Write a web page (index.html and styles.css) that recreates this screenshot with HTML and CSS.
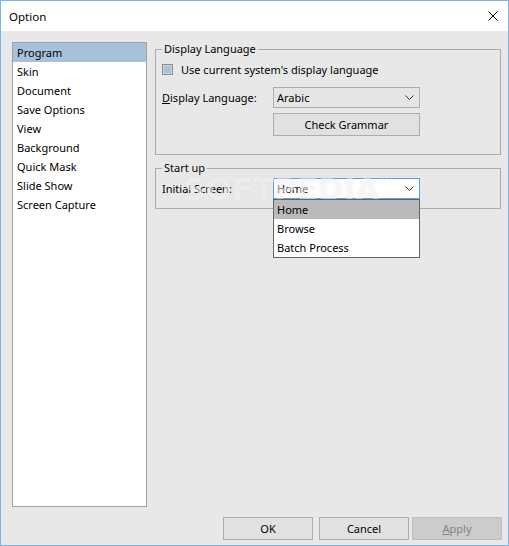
FILE: index.html
```html
<!DOCTYPE html>
<html>
<head>
<meta charset="utf-8">
<link rel="stylesheet" href="styles.css">
</head>
<body>
<div class="window">
  <div class="titlebar">
    <span class="title">Option</span>
    <svg class="close" width="10" height="10" viewBox="0 0 10 10"><path d="M0.5 0.5L9.5 9.5M9.5 0.5L0.5 9.5" stroke="#000" stroke-width="1" fill="none"/></svg>
  </div>
  <div class="content">
    <div class="main">
      <ul class="list">
        <li class="selected">Program</li>
        <li>Skin</li>
        <li>Document</li>
        <li>Save Options</li>
        <li>View</li>
        <li>Background</li>
        <li>Quick Mask</li>
        <li>Slide Show</li>
        <li>Screen Capture</li>
      </ul>
      <div class="panel">
        <fieldset class="group g1">
          <legend>Display Language</legend>
          <div class="row check-row"><span class="checkbox"></span><span>Use current system's display language</span></div>
          <div class="row field-row">
            <span class="label"><u>D</u>isplay Language:</span>
            <div class="combo"><span>Arabic</span><svg class="chev" width="9" height="5" viewBox="0 0 9 5"><polyline points="0.5,0.5 4.5,4.5 8.5,0.5" fill="none" stroke="#333" stroke-width="1"/></svg></div>
          </div>
          <div class="row btn-row">
            <span class="label"></span>
            <div class="btn wide">Check Grammar</div>
          </div>
        </fieldset>
        <fieldset class="group g2">
          <legend>Start up</legend>
          <div class="row field-row2">
            <span class="label">Initial Screen:</span>
            <div class="combo focused"><span>Home</span><svg class="chev" width="9" height="5" viewBox="0 0 9 5"><polyline points="0.5,0.5 4.5,4.5 8.5,0.5" fill="none" stroke="#333" stroke-width="1"/></svg>
              <ul class="dropdown">
                <li class="hl">Home</li>
                <li>Browse</li>
                <li>Batch Process</li>
              </ul>
            </div>
          </div>
        </fieldset>
      </div>
    </div>
    <div class="buttons">
      <div class="btn ok">OK</div>
      <div class="btn cancel">Cancel</div>
      <div class="btn apply disabled"><u>A</u>pply</div>
    </div>
  </div>
  <div class="watermark">SOFTPEDIA<sup>®</sup></div>
</div>
</body>
</html>
```
FILE: styles.css
```css
* { box-sizing: border-box; }
html, body { margin: 0; padding: 0; }
body {
  font-family: "Noto Sans", "Liberation Sans", sans-serif;
  font-size: 11px;
  color: #000;
  background: #e8e8e8;
}
.window {
  position: relative;
  width: 509px;
  height: 546px;
  border: 1px solid #7ab6ee;
  display: flex;
  flex-direction: column;
  overflow: hidden;
}
.titlebar {
  height: 30px;
  background: #fff;
  display: flex;
  align-items: center;
  justify-content: space-between;
  padding: 0 10px 0 8px;
  flex: none;
}
.title { font-size: 11.5px; line-height: 16px; margin-top: 1px; }
.close { display: block; margin-top: -1px; }
.content {
  flex: 1;
  background: #e8e8e8;
  padding: 11px 6px 5px 11px;
  display: flex;
  flex-direction: column;
}
.main {
  height: 465px;
  display: flex;
  flex: none;
}
.list {
  list-style: none;
  margin: 0;
  padding: 0;
  width: 135px;
  height: 465px;
  background: #fff;
  border: 1px solid #a0a0a0;
}
.list li {
  height: 19px;
  line-height: 19px;
  padding-left: 4px;
}
.list li.selected { background: #a7c1db; }
.panel {
  margin-left: 8px;
  width: 346px;
  display: flex;
  flex-direction: column;
}
.group {
  margin: 0;
  padding: 0 6px;
  border: 1px solid #acacac;
  min-width: 0;
}
.group legend {
  padding: 0 2px;
  line-height: 14px;
  height: 14px;
  margin-left: 0;
}
.g1 { padding-top: 5px; padding-bottom: 18px; }
.g2 { margin-top: 6px; padding-top: 3px; padding-bottom: 9px; }
.row { display: flex; align-items: center; }
.check-row { height: 16px; }
.checkbox {
  width: 11px;
  height: 11px;
  border: 1px solid #8e8e8e;
  background: #a9c2dc;
  box-shadow: inset 0 0 0 1px #c6d6e6;
  margin-right: 8px;
  flex: none;
}
.label { width: 111px; flex: none; }
.field-row { margin-top: 10px; }
.btn-row { margin-top: 5px; }
.combo {
  position: relative;
  width: 147px;
  height: 21px;
  border: 1px solid #acacac;
  background: #e5e5e5;
  display: flex;
  align-items: center;
  justify-content: space-between;
  padding: 0 5px 0 3px;
}
.combo.focused { background: #fff; border-color: #5a9fe3; }
.chev { display: block; }
.btn {
  height: 23px;
  border: 1px solid #adadad;
  background: #e1e1e1;
  display: flex;
  align-items: center;
  justify-content: center;
}
.btn.wide { width: 147px; }
.dropdown {
  position: absolute;
  left: -1px;
  top: 20px;
  width: 147px;
  margin: 0;
  padding: 0;
  list-style: none;
  background: #fff;
  border: 1px solid #646464;
  z-index: 2;
}
.dropdown li {
  height: 19px;
  line-height: 19px;
  padding-left: 3px;
}
.dropdown li.hl { background: #bababa; }
.buttons {
  margin-top: 10px;
  display: flex;
  justify-content: flex-end;
}
.buttons .btn { width: 90px; }
.buttons .ok { margin-right: 6px; }
.buttons .cancel { margin-right: 3px; }
.btn.disabled {
  background: #cccccc;
  border-color: #bfbfbf;
  color: #838383;
}
.watermark {
  position: absolute;
  left: 182px;
  top: 170px;
  font-family: "DejaVu Sans", sans-serif;
  font-weight: bold;
  font-size: 31px;
  color: rgba(255, 255, 255, 0.55);
  text-shadow: 0 0 2px rgba(0, 0, 0, 0.08);
  pointer-events: none;
  z-index: 1;
}
.watermark sup { font-size: 10px; vertical-align: 20px; }
```
